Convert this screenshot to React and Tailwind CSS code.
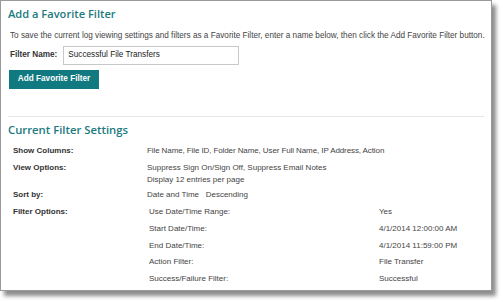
export default function App() {
  const font = { fontFamily: '"Liberation Sans", Arial, sans-serif' };
  const rows = [
    ["Use Date/Time Range:", "Yes"],
    ["Start Date/Time:", "4/1/2014 12:00:00 AM"],
    ["End Date/Time:", "4/1/2014 11:59:00 PM"],
    ["Action Filter:", "File Transfer"],
    ["Success/Failure Filter:", "Successful"],
  ];
  return (
    <div className="w-[503px] h-[302px] bg-white overflow-hidden" style={font}>
      <div className="w-[492px] h-[291px] border border-[#9a9a9a] bg-white shadow-[4px_5px_4px_rgba(0,0,0,0.45)] flex flex-col px-[7px] whitespace-nowrap">
        <h1 className="shrink-0 mt-[5px] text-[11.1px] leading-[16px] font-semibold text-[#1c7a80]" style={{ fontFamily: '"Open Sans", sans-serif' }}>
          Add a Favorite Filter
        </h1>
        <p className="shrink-0 mt-[9px] ml-[2px] text-[8.2px] leading-[10px] text-[#444]">
          To save the current log viewing settings and filters as a Favorite Filter, enter a name below, then click the Add Favorite Filter button.
        </p>
        <div className="shrink-0 mt-[5px] ml-[2px] flex items-center gap-[6px]">
          <span className="text-[8.2px] font-bold text-[#333]">Filter Name:</span>
          <div className="w-[176px] h-[19px] border border-[#c8c8c8] flex items-center px-[4px] text-[8.2px] text-[#222]">
            Successful File Transfers
          </div>
        </div>
        <button className="shrink-0 mt-[5px] ml-[1px] w-[90px] h-[19px] bg-[#117a80] text-white text-[8.2px] font-bold flex items-center justify-center">
          Add Favorite Filter
        </button>
        <div className="shrink-0 mt-[27px] h-px bg-[#e6e6e6]" />
        <h2 className="shrink-0 mt-[5px] text-[11.3px] leading-[16px] font-semibold text-[#1c7a80]" style={{ fontFamily: '"Open Sans", sans-serif' }}>
          Current Filter Settings
        </h2>
        <div className="shrink-0 mt-[7px] ml-[5px] flex flex-col text-[8px] leading-[12px] text-[#444]">
          <div className="flex h-[17px] items-start">
            <span className="w-[134px] font-bold text-[#333]">Show Columns:</span>
            <span className="tracking-[-0.1px]">File Name, File ID, Folder Name, User Full Name, IP Address, Action</span>
          </div>
          <div className="flex h-[27px] items-start">
            <span className="w-[134px] font-bold text-[#333]">View Options:</span>
            <span>Suppress Sign On/Sign Off, Suppress Email Notes<br />Display 12 entries per page</span>
          </div>
          <div className="flex h-[17px] items-start">
            <span className="w-[134px] font-bold text-[#333]">Sort by:</span>
            <span>Date and Time&nbsp;&nbsp; Descending</span>
          </div>
          <div className="flex items-start">
            <span className="w-[136px] font-bold text-[#333]">Filter Options:</span>
            <div className="flex flex-col">
              {rows.map(([k, v]) => (
                <div key={k} className="flex h-[16.8px]">
                  <span className="w-[230px]">{k}</span>
                  <span>{v}</span>
                </div>
              ))}
            </div>
          </div>
        </div>
      </div>
    </div>
  );
}
